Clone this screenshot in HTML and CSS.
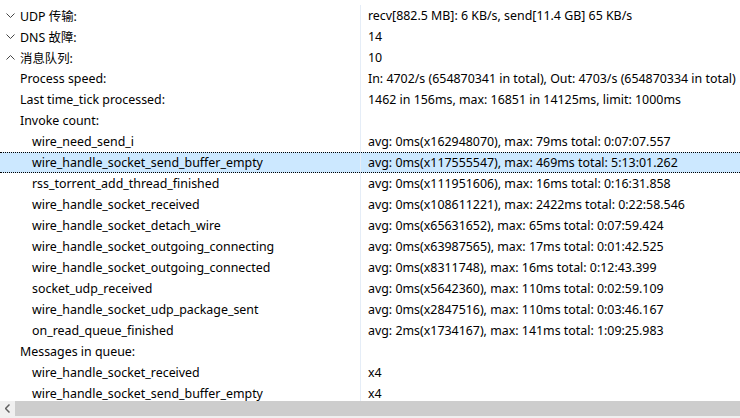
FILE: index.html
```html
<!DOCTYPE html>
<html>
<head>
<meta charset="utf-8">
<link rel="stylesheet" href="styles.css">
</head>
<body>
<div class="view">
  <div class="tree">
    <div class="row"><div class="name l0"><svg class="chev" viewBox="0 0 9 5" width="9" height="5"><path d="M0.5 0.5 L4.5 4.5 L8.5 0.5"/></svg>UDP 传输:</div><div class="val">recv[882.5 MB]: 6 KB/s, send[11.4 GB] 65 KB/s</div></div>
    <div class="row"><div class="name l0"><svg class="chev" viewBox="0 0 9 5" width="9" height="5"><path d="M0.5 0.5 L4.5 4.5 L8.5 0.5"/></svg>DNS 故障:</div><div class="val">14</div></div>
    <div class="row"><div class="name l0"><svg class="chev" viewBox="0 0 9 5" width="9" height="5"><path d="M0.5 4.5 L4.5 0.5 L8.5 4.5"/></svg>消息队列:</div><div class="val">10</div></div>
    <div class="row"><div class="name l1">Process speed:</div><div class="val">In: 4702/s (654870341 in total), Out: 4703/s (654870334 in total)</div></div>
    <div class="row"><div class="name l1">Last time_tick processed:</div><div class="val">1462 in 156ms, max: 16851 in 14125ms, limit: 1000ms</div></div>
    <div class="row"><div class="name l1">Invoke count:</div><div class="val"></div></div>
    <div class="row"><div class="name l2">wire_need_send_i</div><div class="val">avg: 0ms(x162948070), max: 79ms total: 0:07:07.557</div></div>
    <div class="row sel"><div class="name l2">wire_handle_socket_send_buffer_empty</div><div class="val">avg: 0ms(x117555547), max: 469ms total: 5:13:01.262</div></div>
    <div class="row"><div class="name l2">rss_torrent_add_thread_finished</div><div class="val">avg: 0ms(x111951606), max: 16ms total: 0:16:31.858</div></div>
    <div class="row"><div class="name l2">wire_handle_socket_received</div><div class="val">avg: 0ms(x108611221), max: 2422ms total: 0:22:58.546</div></div>
    <div class="row"><div class="name l2">wire_handle_socket_detach_wire</div><div class="val">avg: 0ms(x65631652), max: 65ms total: 0:07:59.424</div></div>
    <div class="row"><div class="name l2">wire_handle_socket_outgoing_connecting</div><div class="val">avg: 0ms(x63987565), max: 17ms total: 0:01:42.525</div></div>
    <div class="row"><div class="name l2">wire_handle_socket_outgoing_connected</div><div class="val">avg: 0ms(x8311748), max: 16ms total: 0:12:43.399</div></div>
    <div class="row"><div class="name l2">socket_udp_received</div><div class="val">avg: 0ms(x5642360), max: 110ms total: 0:02:59.109</div></div>
    <div class="row"><div class="name l2">wire_handle_socket_udp_package_sent</div><div class="val">avg: 0ms(x2847516), max: 110ms total: 0:03:46.167</div></div>
    <div class="row"><div class="name l2">on_read_queue_finished</div><div class="val">avg: 2ms(x1734167), max: 141ms total: 1:09:25.983</div></div>
    <div class="row"><div class="name l1">Messages in queue:</div><div class="val"></div></div>
    <div class="row"><div class="name l2">wire_handle_socket_received</div><div class="val">x4</div></div>
    <div class="row"><div class="name l2">wire_handle_socket_send_buffer_empty</div><div class="val">x4</div></div>
  </div>
  <div class="hscroll">
    <div class="arrow"><svg viewBox="0 0 5 9" width="5" height="9"><path d="M4.5 0.5 L0.5 4.5 L4.5 8.5"/></svg></div>
    <div class="thumb"></div>
  </div>
</div>
</body>
</html>
```
FILE: styles.css
```css
html, body {
  margin: 0;
  padding: 0;
  background: #ffffff;
}
body {
  font-family: "Noto Sans", "Noto Sans CJK SC", sans-serif;
  font-size: 12.4px;
  color: #000000;
}
.view {
  width: 740px;
  height: 418px;
  display: flex;
  flex-direction: column;
  overflow: hidden;
}
.tree {
  height: 401px;
  padding-top: 5px;
  box-sizing: border-box;
  overflow: hidden;
  flex: none;
}
.row {
  display: flex;
  height: 21px;
  align-items: center;
  white-space: nowrap;
  box-sizing: border-box;
}
.row.sel {
  background: #cce8ff;
  border-top: 1px dotted #000;
  border-bottom: 1px dotted #000;
}
.name {
  width: 360px;
  flex: none;
  box-sizing: border-box;
  display: flex;
  align-items: center;
  height: 100%;
}
.l0 { padding-left: 6px; }
.l1 { padding-left: 20px; }
.l2 { padding-left: 32px; }
.chev {
  fill: none;
  stroke: #444;
  stroke-width: 1;
  margin-right: 5px;
}
.val {
  flex: none;
  height: 100%;
  display: flex;
  align-items: center;
  padding-left: 7px;
  border-left: 1px solid #e5edf7;
  box-sizing: border-box;
}
.hscroll {
  flex: none;
  height: 17px;
  display: flex;
  background: #f0f0f0;
}
.arrow {
  width: 15px;
  height: 15px;
  display: flex;
  align-items: center;
  justify-content: center;
  flex: none;
}
.arrow svg {
  fill: none;
  stroke: #606060;
  stroke-width: 1.5;
}
.thumb {
  flex: 1;
  height: 15px;
  background: #cdcdcd;
}
```
